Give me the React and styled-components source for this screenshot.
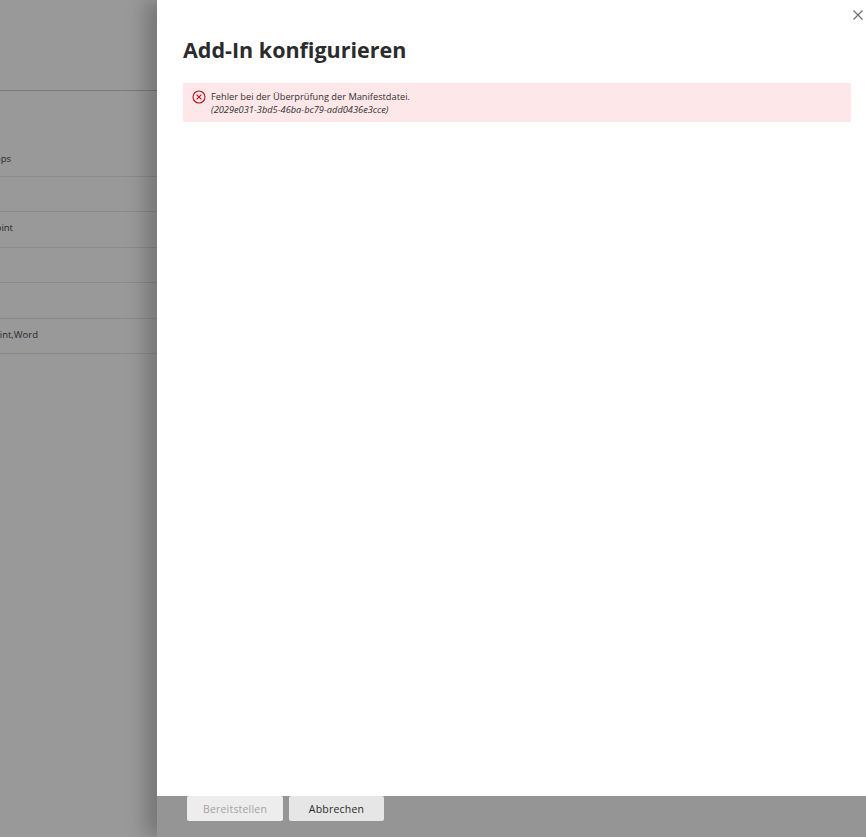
import styled, { createGlobalStyle } from 'styled-components';

const GlobalStyle = createGlobalStyle`
  html, body {
    margin: 0;
    padding: 0;
    height: 100%;
    overflow: hidden;
  }
  body {
    font-family: "Open Sans", "Noto Sans", "Liberation Sans", sans-serif;
  }
`

const Page = styled.div`
  display: flex;
  width: 866px;
  height: 837px;
  overflow: hidden;
  background-color: #999999;
`

const Backdrop = styled.div`
  width: 157px;
  flex-shrink: 0;
  padding-top: 90px;
  box-sizing: border-box;
`

const HeaderLine = styled.div`
  height: 1px;
  background-color: #7a7a7a;
  margin-bottom: 50px;
`

const TableRow = styled.div`
  display: flex;
  align-items: center;
  height: ${(props) => props.$height}px;
  padding-bottom: ${(props) => props.$lift || 0}px;
  box-sizing: border-box;
  border-bottom: 1px solid #8a8a8a;
`

const RowText = styled.div`
  width: ${(props) => props.$end}px;
  display: flex;
  justify-content: flex-end;
  white-space: nowrap;
  font-size: 9.5px;
  color: #26282c;
`

const Panel = styled.div`
  flex: 1;
  display: flex;
  flex-direction: column;
  box-shadow: -12px 0 18px rgba(0, 0, 0, 0.22);
  position: relative;
`

const Sheet = styled.div`
  flex: 1;
  background-color: #ffffff;
  display: flex;
  flex-direction: column;
  padding: 0 15px 0 26px;
`

const CloseRow = styled.div`
  display: flex;
  justify-content: flex-end;
  margin-right: -12px;
  padding-top: 10px;
  height: 30px;
  box-sizing: border-box;
`

const Title = styled.h1`
  margin: 0 0 13px 0;
  height: 40px;
  line-height: 40px;
  font-size: 21.5px;
  font-weight: 700;
  color: #2b2b2b;
`

const Alert = styled.div`
  display: flex;
  background-color: #fde7e9;
  height: 39px;
  padding: 7px 9px;
  box-sizing: border-box;
  gap: 5px;
`

const AlertIcon = styled.svg`
  width: 14px;
  height: 14px;
  flex-shrink: 0;
`

const AlertText = styled.div`
  font-size: 9.25px;
  line-height: 13px;
  color: #323130;
`

const AlertId = styled.div`
  font-style: italic;
`

const Footer = styled.div`
  height: 41px;
  flex-shrink: 0;
  display: flex;
  gap: 6px;
  padding-left: 30px;
  background-color: #959595;
`

const FooterButton = styled.button`
  width: ${(props) => props.$width}px;
  height: 25px;
  padding: 0;
  border: none;
  border-radius: 2px;
  font-family: inherit;
  font-size: 10.5px;
  letter-spacing: 0.2px;
  background-color: ${(props) => (props.disabled ? '#ededed' : '#e6e6e6')};
  color: ${(props) => (props.disabled ? '#a3a3a3' : '#2b2b2b')};
`

const rows = [
  { text: 'Apps', height: 36, end: 11, lift: 1 },
  { text: '', height: 35 },
  { text: 'PowerPoint', height: 36, end: 13, lift: 4 },
  { text: '', height: 35 },
  { text: '', height: 36 },
  { text: 'PowerPoint,Word', height: 35, end: 38, lift: 4 },
]

function App() {
  return (
    <Page>
      <GlobalStyle />
      <Backdrop>
        <HeaderLine />
        {rows.map((row, i) => (
          <TableRow key={i} $height={row.height} $lift={row.lift}>
            {row.text && <RowText $end={row.end}>{row.text}</RowText>}
          </TableRow>
        ))}
      </Backdrop>
      <Panel>
        <Sheet>
          <CloseRow>
            <svg width="10" height="10" viewBox="0 0 10 10">
              <path d="M0.5 0.5L9.5 9.5M9.5 0.5L0.5 9.5" stroke="#6b6b6b" strokeWidth="1.1" fill="none" />
            </svg>
          </CloseRow>
          <Title>Add-In konfigurieren</Title>
          <Alert>
            <AlertIcon viewBox="0 0 14 14">
              <circle cx="7" cy="7" r="6" stroke="#b3121d" strokeWidth="1.1" fill="none" />
              <path d="M4.6 4.6L9.4 9.4M9.4 4.6L4.6 9.4" stroke="#b3121d" strokeWidth="1.1" fill="none" />
            </AlertIcon>
            <AlertText>
              Fehler bei der Überprüfung der Manifestdatei.
              <AlertId>(2029e031-3bd5-46ba-bc79-add0436e3cce)</AlertId>
            </AlertText>
          </Alert>
        </Sheet>
        <Footer>
          <FooterButton $width={96} disabled>Bereitstellen</FooterButton>
          <FooterButton $width={95}>Abbrechen</FooterButton>
        </Footer>
      </Panel>
    </Page>
  );
}

export default App;
